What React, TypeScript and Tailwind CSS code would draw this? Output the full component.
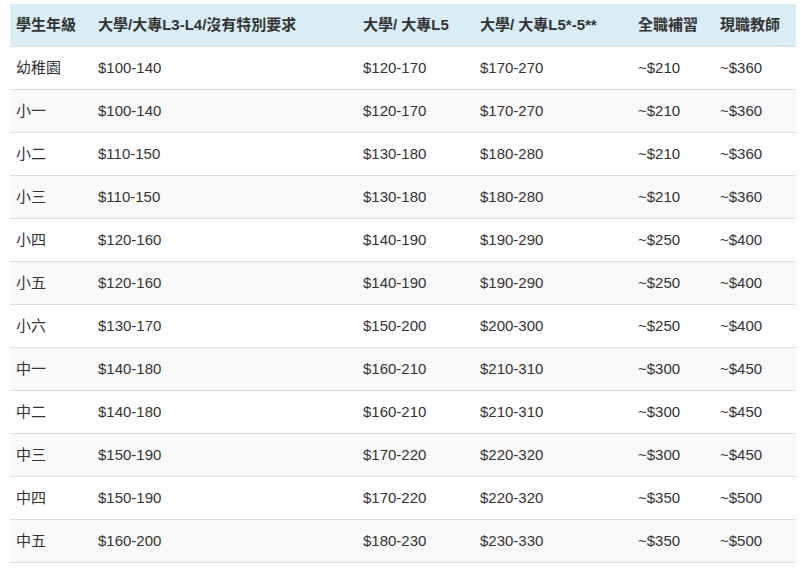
const head = ["學生年級", "大學/大專L3-L4/沒有特別要求", "大學/ 大專L5", "大學/ 大專L5*-5**", "全職補習", "現職教師"];

const rows: string[][] = [
  ["幼稚園", "$100-140", "$120-170", "$170-270", "~$210", "~$360"],
  ["小一", "$100-140", "$120-170", "$170-270", "~$210", "~$360"],
  ["小二", "$110-150", "$130-180", "$180-280", "~$210", "~$360"],
  ["小三", "$110-150", "$130-180", "$180-280", "~$210", "~$360"],
  ["小四", "$120-160", "$140-190", "$190-290", "~$250", "~$400"],
  ["小五", "$120-160", "$140-190", "$190-290", "~$250", "~$400"],
  ["小六", "$130-170", "$150-200", "$200-300", "~$250", "~$400"],
  ["中一", "$140-180", "$160-210", "$210-310", "~$300", "~$450"],
  ["中二", "$140-180", "$160-210", "$210-310", "~$300", "~$450"],
  ["中三", "$150-190", "$170-220", "$220-320", "~$300", "~$450"],
  ["中四", "$150-190", "$170-220", "$220-320", "~$350", "~$500"],
  ["中五", "$160-200", "$180-230", "$230-330", "~$350", "~$500"],
];

const widths = ["w-[82px]", "w-[265px]", "w-[117px]", "w-[158px]", "w-[82px]", "w-[82px]"];

export default function App() {
  return (
    <div className="min-h-screen bg-white pt-[4px] pl-[10px] font-['Liberation_Sans','Noto_Sans_CJK_TC',sans-serif] text-[15px] text-[#333]">
      <table className="w-[786px] table-fixed border-collapse">
        <thead>
          <tr className="bg-[#d9edf7]">
            {head.map((h, i) => (
              <th key={i} className={`${widths[i]} h-[42px] px-[6px] pt-[1px] text-left font-bold whitespace-nowrap border-b border-[#ddd]`}>
                {h}
              </th>
            ))}
          </tr>
        </thead>
        <tbody>
          {rows.map((r, ri) => (
            <tr key={ri} className={ri % 2 === 1 ? "bg-[#f9f9f9]" : "bg-white"}>
              {r.map((c, ci) => (
                <td key={ci} className="h-[43px] px-[6px] pt-[2px] text-left border-b border-[#ddd] whitespace-nowrap">
                  {c}
                </td>
              ))}
            </tr>
          ))}
        </tbody>
      </table>
    </div>
  );
}
